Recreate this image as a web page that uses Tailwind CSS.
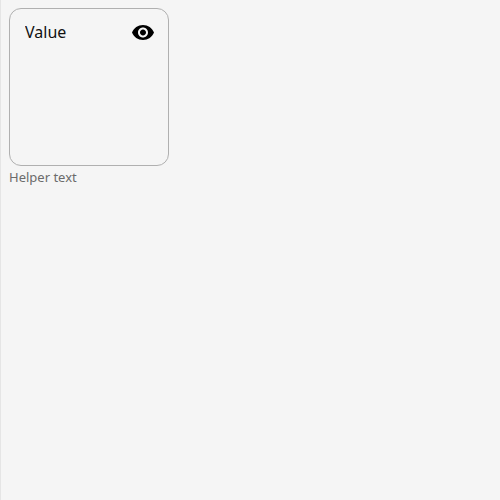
<!DOCTYPE html>
<html lang="en">
<head>
<meta charset="utf-8">
<title>Text field</title>
<script src="https://cdn.jsdelivr.net/npm/@tailwindcss/browser@4"></script>
</head>
<body class="min-h-screen border-l border-[#e5e5e5] bg-[#f5f5f5] p-2 font-['Noto_Sans',sans-serif]">
<div class="flex w-40 flex-col">
  <div class="flex items-start rounded-xl border border-[#b0b0b0] pt-[11px] pr-[13px] pb-[13px] pl-[15px]">
    <textarea id="value" aria-label="Value" aria-describedby="helper" rows="5" class="block h-33 min-w-0 flex-1 resize-none bg-transparent text-base leading-6 text-[#111] outline-none">Value</textarea>
    <button type="button" aria-label="Toggle visibility" class="shrink-0">
      <svg class="size-6" viewBox="0 0 24 24" fill="currentColor" aria-hidden="true"><path d="M12 5C7 5 2.73 8.11 1 12.5 2.73 16.89 7 20 12 20s9.27-3.11 11-7.5C21.27 8.11 17 5 12 5zM12 17.5c-2.76 0-5-2.24-5-5s2.24-5 5-5 5 2.24 5 5-2.24 5-5 5zm0-8c-1.66 0-3 1.34-3 3s1.34 3 3 3 3-1.34 3-3-1.34-3-3-3z"/></svg>
    </button>
  </div>
  <p id="helper" class="mt-[3px] text-[13px] leading-4 text-[#6b6b6b]">Helper text</p>
</div>
</body>
</html>
